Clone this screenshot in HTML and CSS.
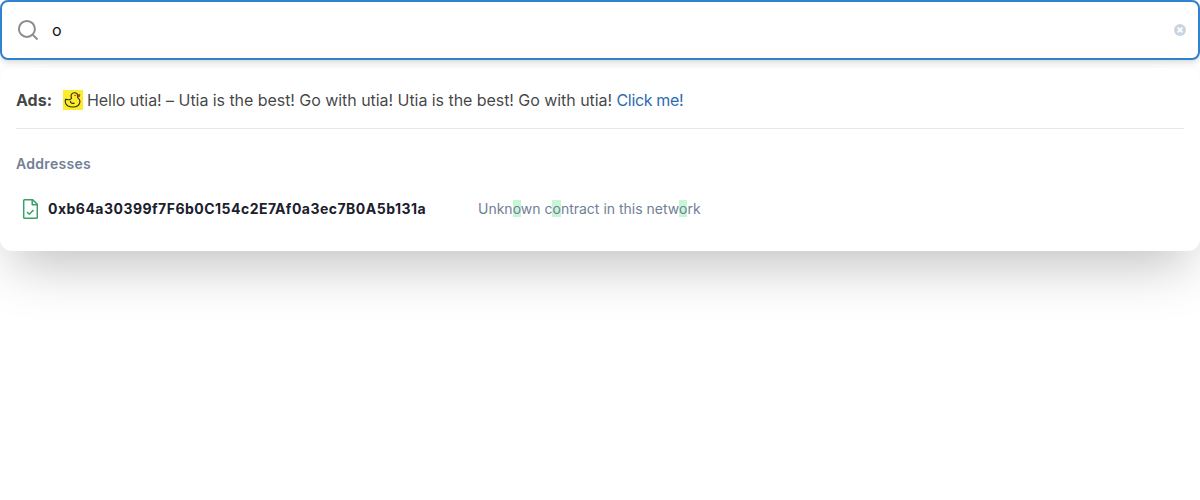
FILE: index.html
```html
<!DOCTYPE html>
<html lang="en">
<head>
<meta charset="utf-8">
<title>Search</title>
<link rel="stylesheet" href="styles.css">
</head>
<body>
<form class="search">
  <svg class="search-icon" viewBox="0 0 20 20"><circle cx="8.9" cy="8.9" r="8"/><path d="M14.6 14.6l4.9 4.900"/></svg>
  <span class="search-value">o</span>
  <svg class="clear" viewBox="0 0 12 12"><circle cx="6" cy="6" r="6"/><path d="M3.600 3.600l4.800 4.800M8.400 3.600L3.600 8.400"/></svg>
</form>
<section class="results">
  <div class="ad">
    <b class="ad-label">Ads:</b>
    <svg class="duck" viewBox="0 0 20 20">
      <rect class="duck-bg" width="20" height="20"/>
      <path d="M2.600 9.200C1.800 11.500 2.700 14.400 5 16c2.800 1.500 7.500 1.400 9.800-.3 2.100-1.600 2.700-4.500 1.500-6.300-.5-.8-1.800-1.200-1.700-2.300C15.400 4.500 13.600 2.600 11.300 2.800 9 3 7.700 4.700 8.100 6.600c.2 1 .8 1.500.2 2C6.900 9.800 4.700 10 2.600 9.200z"/>
      <path d="M7.300 10.800c-.1 2.300 1.600 3 4.200 2.300"/>
      <circle class="duck-eye" cx="12" cy="5.400" r=".6"/>
      <path class="duck-beak" d="M14.200 5.200l2.700-.9-.4 2.400-2 .4z"/>
    </svg>
    <span class="ad-text">Hello utia! – Utia is the best! Go with utia! Utia is the best! Go with utia! <a class="ad-link">Click me!</a></span>
  </div>
  <h2 class="group">Addresses</h2>
  <div class="row">
    <svg class="contract" viewBox="0 0 16 20"><path d="M2.500.8h8.200L15.300 5.300v13.200a.8.8 0 0 1-.8.8h-12a.8.8 0 0 1-.8-.8V1.600A.8.8 0 0 1 2.500.8z"/><path d="M10.200.8v5h5.100M5.100 12.900l2.200 2.300 4.200-4.300"/></svg>
    <b class="hash">0xb64a30399f7F6b0C154c2E7Af0a3ec7B0A5b131a</b>
    <span class="name">Unkn<mark>o</mark>wn c<mark>o</mark>ntract in this netw<mark>o</mark>rk</span>
  </div>
</section>
</body>
</html>
```
FILE: styles.css
```css
* { box-sizing: border-box; }
body {
  margin: 0;
  min-height: 100vh;
  font: 16px/24px Inter, sans-serif;
  color: rgba(16, 17, 18, 0.8);
  background: #fff;
}
.search {
  display: flex;
  align-items: center;
  height: 60px;
  padding: 0 12px 0 16px;
  border: 2px solid #3182ce;
  border-radius: 8px;
  background: #fff;
  box-shadow: 0 4px 6px -1px rgba(0, 0, 0, 0.1), 0 2px 4px -1px rgba(0, 0, 0, 0.06);
}
.search-icon {
  width: 20px;
  height: 20px;
  margin-right: 14px;
  overflow: visible;
  fill: none;
  stroke: #8c8c8c;
  stroke-width: 2;
}
.search-value { flex: 1; color: #101112; }
.clear { width: 12px; height: 12px; fill: #cbd5e0; }
.clear path { stroke: #fff; stroke-width: 1.8; }
.results {
  height: 183px;
  margin-top: 8px;
  padding: 20px 16px 0;
  border-radius: 12px;
  background: #fff;
  position: relative;
  box-shadow: 0 25px 50px -12px rgba(0, 0, 0, 0.25);
}
.ad {
  display: flex;
  align-items: center;
  height: 41px;
  padding-bottom: 16px;
  border-bottom: 1px solid #e8e8e8;
}
.ad-label { width: 47px; }
.duck {
  width: 20px;
  height: 20px;
  margin-right: 4px;
  fill: none;
  stroke: #302d12;
  stroke-width: 1.1;
}
.duck .duck-bg { fill: #fbec2c; stroke: none; }
.duck .duck-eye { fill: #302d12; stroke: none; }
.duck .duck-beak { fill: #b93225; stroke: #6b2418; stroke-width: 0.5; }
.ad-text { letter-spacing: -0.05px; }
.ad-link { letter-spacing: -0.35px; color: #2b6cb0; }
.group {
  margin: 25px 0 0;
  font-size: 14px;
  line-height: 20px;
  font-weight: 600;
  letter-spacing: 0.3px;
  color: #718096;
}
.row {
  display: flex;
  align-items: center;
  height: 20px;
  margin-top: 25px;
  padding-left: 6px;
  font-size: 14px;
  line-height: 20px;
}
.contract {
  width: 16px;
  height: 20px;
  margin-right: 10px;
  fill: none;
  stroke: #38a169;
  stroke-width: 1.5;
  stroke-linejoin: round;
}
.hash { width: 430px; letter-spacing: 0.48px; color: #1a202c; }
.name { color: #718096; }
mark { color: inherit; background: #c6f6d5; }
```
